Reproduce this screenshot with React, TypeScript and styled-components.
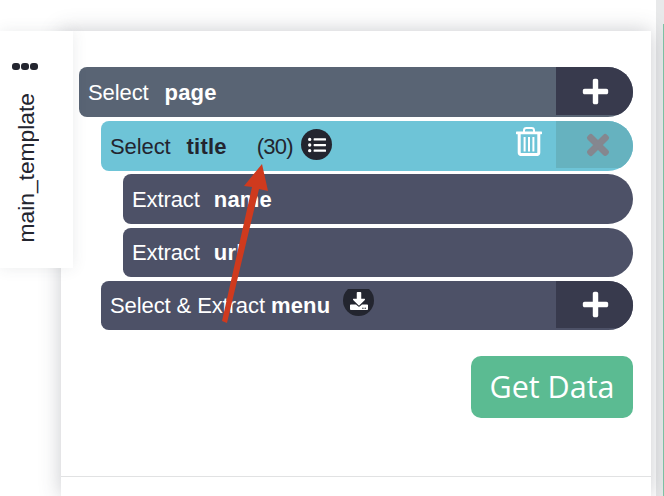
import React from "react";
import styled, { createGlobalStyle } from "styled-components";
import { FaPlus, FaTimes, FaListUl, FaDownload } from "react-icons/fa";

const Global = createGlobalStyle`
  html, body { margin: 0; padding: 0; background: #fff; }
  body { font-family: "Liberation Sans", Arial, sans-serif; }
`;

const Page = styled.div`
  position: relative;
  width: 664px;
  height: 496px;
  overflow: hidden;
  background: #fff;
  display: flex;
  align-items: flex-start;
`;

const Tab = styled.aside`
  position: relative;
  z-index: 2;
  width: 73px;
  height: 237px;
  margin-top: 31px;
  margin-right: -12px;
  flex: none;
  background: #fff;
  box-shadow: 0 0 14px rgba(60, 66, 80, 0.1);
  display: flex;
  flex-direction: column;
  align-items: center;
  padding-top: 32px;
  box-sizing: border-box;
`;

const Dots = styled.div`
  display: flex;
  gap: 1px;
  margin-left: -23px;
  & > i {
    width: 8px;
    height: 7px;
    border-radius: 3px;
    background: #23252f;
  }
`;

const TabLabel = styled.div`
  writing-mode: vertical-rl;
  transform: rotate(180deg);
  margin-top: 23px;
  margin-left: -21px;
  font-size: 22.8px;
  line-height: 23px;
  color: #23252f;
`;

const Card = styled.main`
  position: relative;
  z-index: 1;
  width: 590px;
  height: 465px;
  margin-top: 31px;
  flex: none;
  background: #fff;
  box-shadow: 0 0 20px rgba(60, 66, 80, 0.28);
  box-sizing: border-box;
  padding: 36px 18px 0;
  display: flex;
  flex-direction: column;
`;

const Rows = styled.div`
  display: flex;
  flex-direction: column;
`;

const Row = styled.div<{ $level: number; $tone: string; $gap: number; $h?: number }>`
  display: flex;
  align-items: stretch;
  height: ${(p) => p.$h ?? 50}px;
  margin-left: ${(p) => p.$level * 22}px;
  margin-top: ${(p) => p.$gap}px;
  background: ${(p) => p.$tone};
  border-radius: 8px 25px 25px 8px;
  overflow: hidden;
  color: #fff;
  font-size: 22px;
`;

const Label = styled.div<{ $dark?: boolean; $nameGap: number }>`
  display: flex;
  align-items: center;
  flex: 1;
  padding-left: 9px;
  padding-top: 1px;
  gap: ${(p) => p.$nameGap}px;
  color: ${(p) => (p.$dark ? "#23252f" : "#fff")};
  white-space: nowrap;
  letter-spacing: -0.1px;
`;

const Name = styled.b`
  font-weight: 700;
  letter-spacing: 0.2px;
`;

const Count = styled.span`
  margin-left: 14px;
  margin-right: -8px;
  letter-spacing: -0.7px;
`;

const RoundIcon = styled.span`
  display: inline-flex;
  align-items: center;
  justify-content: center;
  width: 31px;
  height: 31px;
  border-radius: 50%;
  background: #23252f;
  color: #fff;
  font-size: 18px;
`;

const ListBadge = styled(RoundIcon)`
  margin-bottom: 4px;
`;

const Clipped = styled.span`
  display: flex;
  align-self: flex-start;
  height: 27px;
  margin-top: 7px;
  margin-left: 7px;
  overflow: hidden;
`;

const ClippedCircle = styled(RoundIcon)`
  margin-top: -4px;
  flex: none;
`;

const TrashSlot = styled.span`
  display: flex;
  align-items: flex-start;
  padding-top: 6px;
  margin-right: 14px;
`;

const EndButton = styled.div<{ $bg: string; $color: string; $h: number; $size: number; $shift: number }>`
  width: 77px;
  height: ${(p) => p.$h}px;
  flex: none;
  display: flex;
  align-items: center;
  justify-content: center;
  box-sizing: border-box;
  padding-left: ${(p) => p.$shift}px;
  background: ${(p) => p.$bg};
  color: ${(p) => p.$color};
  font-size: ${(p) => p.$size}px;
`;

const BoldTimes = styled(FaTimes)`
  stroke: currentColor;
  stroke-width: 24;
`;

const Actions = styled.div`
  display: flex;
  justify-content: flex-end;
  margin-top: 26px;
`;

const GetData = styled.button`
  width: 162px;
  height: 62px;
  border: none;
  border-radius: 10px;
  background: #5bbb92;
  color: #fff;
  font-family: "Open Sans", sans-serif;
  font-size: 30.5px;
  padding: 0 0 2px;
`;

const Divider = styled.hr`
  position: absolute;
  left: 0;
  right: 0;
  top: 445px;
  margin: 0;
  border: none;
  border-top: 1px solid #e1e2e3;
`;

const Gutter = styled.div`
  position: absolute;
  top: 0;
  right: 0;
  bottom: 0;
  width: 8px;
  background: #e8e9ea;
  z-index: 0;
`;

const GreenEdge = styled.div`
  position: absolute;
  top: 24px;
  right: 0;
  bottom: 0;
  width: 1px;
  background: #7fc4a6;
  z-index: 0;
`;

const Arrow = styled.svg`
  position: absolute;
  left: 0;
  top: 0;
  z-index: 3;
  pointer-events: none;
`;

function TrashIcon() {
  return (
    <svg width="26" height="29" viewBox="0 0 26 29" fill="#fff">
      <path d="M8 5.5V3.4Q8 1 10.5 1H15.5Q18 1 18 3.4V5.5" fill="none" stroke="#fff" strokeWidth="2" />
      <rect x="0" y="4.6" width="26" height="2.6" rx="0.6" />
      <path
        d="M3.2 6.5V25.6Q3.2 27.6 5.4 27.6H20.6Q22.8 27.6 22.8 25.6V6.5"
        fill="none"
        stroke="#fff"
        strokeWidth="3"
      />
      <rect x="7.6" y="10" width="2" height="14.5" />
      <rect x="12" y="10" width="2" height="14.5" />
      <rect x="16.4" y="10" width="2" height="14.5" />
    </svg>
  );
}

export default function App() {
  return (
    <Page>
      <Global />
      <Gutter />
      <GreenEdge />
      <Tab>
        <Dots>
          <i />
          <i />
          <i />
        </Dots>
        <TabLabel>main_template</TabLabel>
      </Tab>
      <Card>
        <Rows>
          <Row $level={0} $tone="#596474" $gap={0}>
            <Label $nameGap={16}>
              Select <Name>page</Name>
            </Label>
            <EndButton $bg="#383a4d" $color="#fff" $h={48} $size={29} $shift={2}>
              <FaPlus />
            </EndButton>
          </Row>
          <Row $level={1} $tone="#6ec4d7" $gap={4}>
            <Label $dark $nameGap={16}>
              Select <Name>title</Name>
              <Count>(30)</Count>
              <ListBadge>
                <FaListUl />
              </ListBadge>
            </Label>
            <TrashSlot>
              <TrashIcon />
            </TrashSlot>
            <EndButton $bg="#66b2bf" $color="#85878f" $h={47} $size={30} $shift={6}>
              <BoldTimes />
            </EndButton>
          </Row>
          <Row $level={2} $tone="#4d5167" $gap={3}>
            <Label $nameGap={14}>
              Extract <Name>name</Name>
            </Label>
          </Row>
          <Row $level={2} $tone="#4d5167" $gap={4} $h={49}>
            <Label $nameGap={14}>
              Extract <Name>url</Name>
            </Label>
          </Row>
          <Row $level={1} $tone="#4d5167" $gap={4} $h={49}>
            <Label $nameGap={6}>
              Select &amp; Extract <Name>menu</Name>
              <Clipped>
                <ClippedCircle>
                  <FaDownload />
                </ClippedCircle>
              </Clipped>
            </Label>
            <EndButton $bg="#383a4d" $color="#fff" $h={47} $size={29} $shift={2}>
              <FaPlus />
            </EndButton>
          </Row>
        </Rows>
        <Actions>
          <GetData>Get Data</GetData>
        </Actions>
        <Divider />
      </Card>
      <Arrow width="664" height="496" viewBox="0 0 664 496">
        <path d="M222 321 L227 323 L259 189 L268 191 L262 164 L244 186 L252 187 Z" fill="#cf3a1e" />
      </Arrow>
    </Page>
  );
}
